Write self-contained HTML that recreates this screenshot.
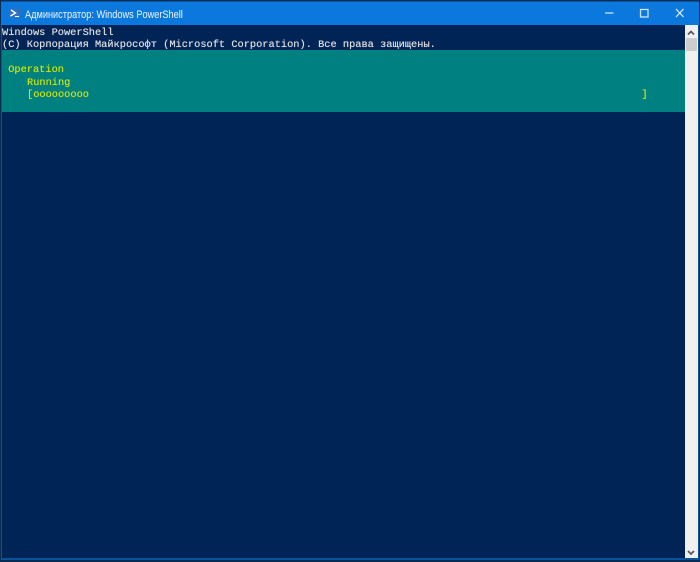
<!DOCTYPE html>
<html>
<head>
<meta charset="utf-8">
<style>
html,body{margin:0;padding:0;width:700px;height:562px;overflow:hidden;background:#0a2c52}
.a{position:absolute}
.t{position:absolute;font-family:"Liberation Mono","DejaVu Sans Mono",monospace;font-size:10.33px;line-height:12px;white-space:pre;color:#e0e0e0;text-shadow:0 0 .6px rgba(230,230,230,.75)}
.y{color:#d2e800;text-shadow:0 0 .6px rgba(210,232,0,.7)}
</style>
</head>
<body>
<div class="a" style="left:0;top:0;width:700px;height:562px;background:#0a2c52"></div>
<div class="a" style="left:1px;top:1px;width:698px;height:559px;background:#06559c"></div>
<div class="a" style="left:1px;top:2px;width:698px;height:23px;background:#0a78dc"></div>
<div class="a" style="left:2px;top:25px;width:696px;height:533px;background:#012456"></div>
<div class="a" style="left:2px;top:50px;width:683px;height:62px;background:#008080"></div>
<div class="a" style="left:684.5px;top:25px;width:13.5px;height:533px;background:#f0f0f0"></div>
<div class="a" style="left:686px;top:38px;width:11px;height:13px;background:#cdcdcd"></div>
<svg class="a" style="left:0;top:0" width="700" height="562" xmlns="http://www.w3.org/2000/svg">
<path d="M9.5 8.5H21.5L20 17.5H8Z" fill="#2f6fbe"/>
<path d="M11 10L15.5 13L10.5 16" fill="none" stroke="#fff" stroke-width="1.4"/>
<path d="M15 16.5H19" stroke="#fff" stroke-width="1.1"/>
<path d="M605 13H613.5" stroke="#eef6fd" stroke-width="1.1"/>
<rect x="640.5" y="9.5" width="7.5" height="7.5" fill="none" stroke="#cfe4f8" stroke-width="1.3"/>
<path d="M676 9L683.5 17M683.5 9L676 17" stroke="#e8f2fc" stroke-width="1.2"/>
<path d="M688 34.5L691 31.5L694 34.5" fill="none" stroke="#5f5560" stroke-width="1.8"/>
<path d="M688 551L691 554L694 551" fill="none" stroke="#5f5560" stroke-width="1.8"/>
</svg>
<div class="a" style="left:25px;top:7.5px;font:11px/14px 'Liberation Sans','DejaVu Sans',sans-serif;color:#dcebfa;white-space:pre;transform:scaleX(.836);transform-origin:0 0;text-shadow:0 0 .5px rgba(220,235,250,.5)">Администратор: Windows PowerShell</div>
<div class="t" style="left:2px;top:26.5px">Windows PowerShell</div>
<div class="t" style="left:2px;top:39px">(C) Корпорация Майкрософт (Microsoft Corporation). Все права защищены.</div>
<div class="t y" style="left:8.2px;top:64px">Operation</div>
<div class="t y" style="left:27px;top:76.5px">Running</div>
<div class="t y" style="left:27px;top:89px">[ooooooooo</div>
<div class="t y" style="left:641.5px;top:89px">]</div>
</body>
</html>
